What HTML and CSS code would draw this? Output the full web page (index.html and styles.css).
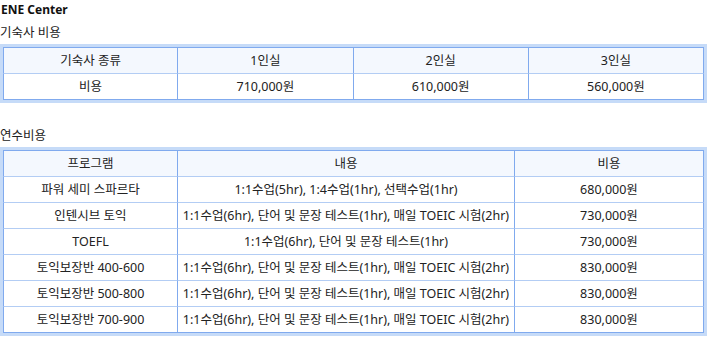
FILE: index.html
```html
<!DOCTYPE html>
<html lang="ko">
<head>
<meta charset="utf-8">
<link rel="stylesheet" href="styles.css">
</head>
<body>
<div class="page">
  <h1 class="title">ENE Center</h1>
  <h2 class="sub">기숙사 비용</h2>
  <table class="grid">
    <colgroup><col class="c4"><col class="c4"><col class="c4"><col class="c4"></colgroup>
    <thead>
      <tr><th>기숙사 종류</th><th>1인실</th><th>2인실</th><th>3인실</th></tr>
    </thead>
    <tbody>
      <tr><td>비용</td><td>710,000원</td><td>610,000원</td><td>560,000원</td></tr>
    </tbody>
  </table>
  <h2 class="sub sub2">연수비용</h2>
  <table class="grid">
    <colgroup><col class="p1"><col class="p2"><col class="p3"></colgroup>
    <thead>
      <tr><th>프로그램</th><th>내용</th><th>비용</th></tr>
    </thead>
    <tbody>
      <tr><td>파워 세미 스파르타</td><td>1:1수업(5hr), 1:4수업(1hr), 선택수업(1hr)</td><td>680,000원</td></tr>
      <tr><td>인텐시브 토익</td><td>1:1수업(6hr), 단어 및 문장 테스트(1hr), 매일 TOEIC 시험(2hr)</td><td>730,000원</td></tr>
      <tr><td>TOEFL</td><td>1:1수업(6hr), 단어 및 문장 테스트(1hr)</td><td>730,000원</td></tr>
      <tr><td>토익보장반 400-600</td><td>1:1수업(6hr), 단어 및 문장 테스트(1hr), 매일 TOEIC 시험(2hr)</td><td>830,000원</td></tr>
      <tr><td>토익보장반 500-800</td><td>1:1수업(6hr), 단어 및 문장 테스트(1hr), 매일 TOEIC 시험(2hr)</td><td>830,000원</td></tr>
      <tr><td>토익보장반 700-900</td><td>1:1수업(6hr), 단어 및 문장 테스트(1hr), 매일 TOEIC 시험(2hr)</td><td>830,000원</td></tr>
    </tbody>
  </table>
</div>
</body>
</html>
```

FILE: styles.css
```css
html, body {
  margin: 0;
  padding: 0;
  background: #fff;
}
body {
  font-family: "Noto Sans", "Noto Sans CJK KR", sans-serif;
  font-size: 12.5px;
  color: #222;
}
.page {
  padding: 2px 3px 0 0;
}
.title {
  margin: 0 0 0 1px;
  font-size: 12px;
  font-weight: bold;
  line-height: 16px;
  color: #111;
}
.sub {
  margin: 7px 0 3px 0;
  font-size: 12.5px;
  font-weight: normal;
  line-height: 16px;
  color: #222;
}
.sub2 {
  margin-top: 25px;
  margin-bottom: 3px;
}
.grid {
  width: 707px;
  border-collapse: separate;
  border-spacing: 0;
  table-layout: fixed;
  background: #c6dbf8;
  padding: 3px;
}
.grid th, .grid td {
  height: 25px;
  padding: 0;
  text-align: center;
  font-weight: normal;
  line-height: 16px;
  border-right: 1px solid #80aaee;
  border-bottom: 1px solid #b3cdf4;
  background: #fff;
}
.grid th {
  background: #f4f8fe;
  border-top: 1px solid #80aaee;
}
.grid th:first-child, .grid td:first-child {
  border-left: 1px solid #80aaee;
}
.grid tbody tr:last-child td {
  border-bottom: 1px solid #80aaee;
}
.c4 { width: 25%; }
.p1 { width: 175px; }
.p2 { width: 337px; }
.p3 { width: auto; }
```
